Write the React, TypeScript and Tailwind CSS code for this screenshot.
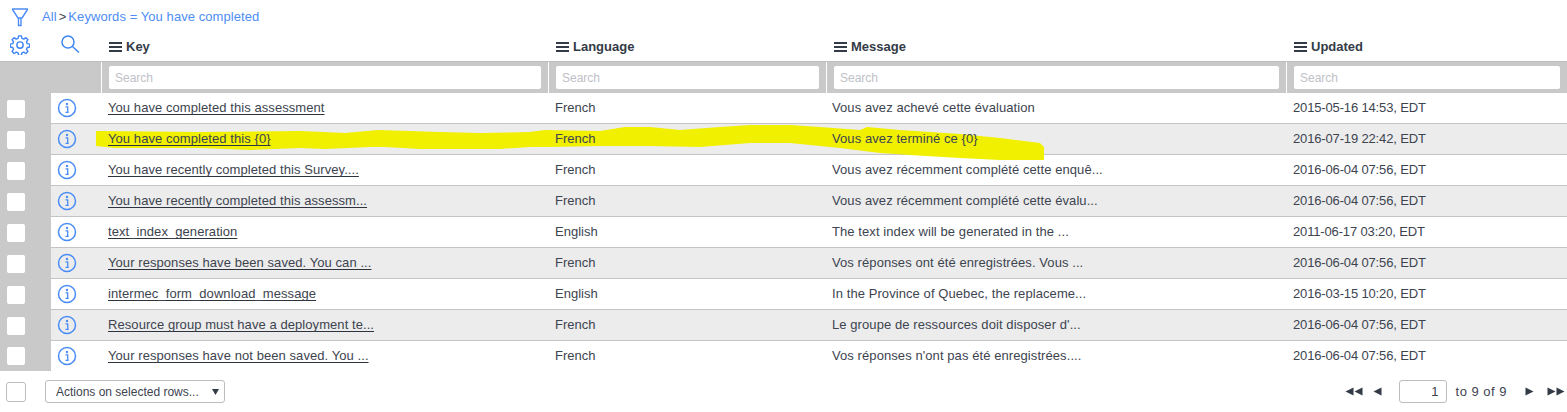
const rows = [
  ["You have completed this assessment", "French", "Vous avez achevé cette évaluation", "2015-05-16 14:53, EDT"],
  ["You have completed this {0}", "French", "Vous avez terminé ce {0}", "2016-07-19 22:42, EDT"],
  ["You have recently completed this Survey....", "French", "Vous avez récemment complété cette enquê...", "2016-06-04 07:56, EDT"],
  ["You have recently completed this assessm...", "French", "Vous avez récemment complété cette évalu...", "2016-06-04 07:56, EDT"],
  ["text_index_generation", "English", "The text index will be generated in the ...", "2011-06-17 03:20, EDT"],
  ["Your responses have been saved. You can ...", "French", "Vos réponses ont été enregistrées. Vous ...", "2016-06-04 07:56, EDT"],
  ["intermec_form_download_message", "English", "In the Province of Quebec, the replaceme...", "2016-03-15 10:20, EDT"],
  ["Resource group must have a deployment te...", "French", "Le groupe de ressources doit disposer d'...", "2016-06-04 07:56, EDT"],
  ["Your responses have not been saved. You ...", "French", "Vos réponses n'ont pas été enregistrées....", "2016-06-04 07:56, EDT"],
];

const cols = "grid grid-cols-[51px_50px_447px_278px_460px_281px]";

function Bars() {
  return (
    <svg width="13" height="10" viewBox="0 0 13 10" className="shrink-0">
      <path d="M0 0h13v2H0zM0 4h13v2H0zM0 8h13v2H0z" fill="#333b47" />
    </svg>
  );
}

function HeaderCell({ label }: { label: string }) {
  return (
    <div className="flex items-center gap-[4px] pl-[8px] text-[13px] font-bold text-[#333b47]">
      <Bars />
      {label}
    </div>
  );
}

function SearchCell() {
  return (
    <div className="flex items-center border-l border-white pl-[7px] pr-[7px]">
      <div className="flex h-[23px] w-full items-center rounded-[2px] bg-white pl-[6px] text-[12px] text-[#c0c0c8]">
        Search
      </div>
    </div>
  );
}

function InfoIcon() {
  return (
    <svg width="20" height="20" viewBox="0 0 20 20" fill="none" className="relative z-10">
      <circle cx="10" cy="10" r="8.5" stroke="#4a8cf5" strokeWidth="1.5" />
      <circle cx="10" cy="6" r="1.2" fill="#4a8cf5" />
      <path d="M8.500 8.800h2.200v5.200M8.500 14.300h3.200" stroke="#4a8cf5" strokeWidth="1.3" />
    </svg>
  );
}

function Tri({ left, n = 1 }: { left?: boolean; n?: number }) {
  return (
    <span className="flex">
      {Array.from({ length: n }).map((_, i) => (
        <svg key={i} width="9" height="9" viewBox="0 0 9 9">
          <path d={left ? "M8.500 0.500v8L0.500 4.500z" : "M0.500 0.500v8l8-4z"} fill="#333b47" />
        </svg>
      ))}
    </span>
  );
}

export default function App() {
  return (
    <div className="relative h-[412px] w-[1567px] overflow-hidden bg-white font-['Liberation_Sans',Arial,sans-serif] text-[13px] text-[#3d4450]">
      {/* Breadcrumb */}
      <div className="flex h-[33px] items-center pl-[11px] tracking-[0.07px]">
        <svg width="18" height="20" viewBox="0 0 18 20" fill="none" stroke="#4d8df5" strokeWidth="1.4">
          <path d="M1 2h16M1.500 2.500L7 11h4l5.500-8.500M7.500 11v7.500h2.500V11" />
        </svg>
        <span className="ml-[13px] text-[#4d8df5]">All</span>
        <span className="mx-[2px] text-[#3d4450]">&gt;</span>
        <span className="text-[#4d8df5]">Keywords = You have completed</span>
      </div>

      {/* Column headers */}
      <div className={`${cols} h-[28px]`}>
        <div className="pl-[10px] pt-[2px]">
          <svg width="20" height="20" viewBox="0 0 24 24" fill="none" stroke="#3f86f2" strokeWidth="1.700" strokeLinejoin="round">
            <path d="M10.300 2h3.400l.6 3 2.200.9 2.600-1.700 2.400 2.400-1.700 2.600.9 2.200 3 .6v3.400l-3 .6-.9 2.200 1.700 2.600-2.400 2.400-2.600-1.700-2.200.9-.6 3h-3.400l-.6-3-2.200-.9-2.600 1.700-2.400-2.400 1.700-2.600-.9-2.200-3-.6v-3.400l3-.6.9-2.200-1.700-2.600 2.400-2.400 2.600 1.700 2.200-.9z" transform="translate(0 -1)" />
            <circle cx="12" cy="12" r="3.800" />
          </svg>
        </div>
        <div className="pl-[10px] pt-[2px]">
          <svg width="19" height="18" viewBox="0 0 19 18" fill="none" stroke="#3f86f2" strokeWidth="1.500">
            <circle cx="7" cy="7" r="6" />
            <path d="M11.500 11.500L18 17.500" />
          </svg>
        </div>
        <HeaderCell label="Key" />
        <HeaderCell label="Language" />
        <HeaderCell label="Message" />
        <HeaderCell label="Updated" />
      </div>

      {/* Filter row */}
      <div className={`${cols} h-[32px] border-t border-[#bdbdbd] bg-[#c9c9c9]`}>
        <div />
        <div />
        <SearchCell />
        <SearchCell />
        <SearchCell />
        <SearchCell />
      </div>

      {/* Rows */}
      {rows.map((r, i) => {
        const line = i < 8 ? "border-b border-[#c4c4c4]" : "";
        return (
          <div key={i} className={`${cols} ${i < 8 ? "h-[31px]" : "h-[30px]"} ${i % 2 === 1 ? "bg-[#ececec]" : "bg-white"}`}>
            <div className="flex items-center bg-[#c9c9c9] pl-[7px]">
              <div className="h-[18px] w-[18px] rounded-[2px] bg-white" />
            </div>
            <div className={`flex items-center pl-[6px] ${line}`}>
              <InfoIcon />
            </div>
            <div className={`flex items-center pl-[7px] tracking-[0.07px] ${line}`}>
              <span className="relative z-10 underline decoration-[#2d3440] underline-offset-2 [text-decoration-skip-ink:none]">{r[0]}</span>
            </div>
            <div className={`flex items-center pl-[7px] ${line}`}>
              <span className="relative z-10">{r[1]}</span>
            </div>
            <div className={`flex items-center pl-[6px] tracking-[0.08px] ${line}`}>
              <span className="relative z-10">{r[2]}</span>
            </div>
            <div className={`flex items-center pl-[7px] tracking-[-0.15px] ${line}`}>
              <span className="relative z-10">{r[3]}</span>
            </div>
          </div>
        );
      })}

      {/* Footer */}
      <div className="flex h-[41px] items-center pl-[6px] pr-[2px]">
        <div className="h-[20px] w-[20px] rounded-[3px] border border-[#bdbdbd]" />
        <div className="ml-[19px] flex h-[23px] w-[180px] items-center justify-between rounded-[3px] border border-[#bdbdbd] pl-[10px] pr-[5px] text-[12px]">
          Actions on selected rows...
          <svg width="7" height="6" viewBox="0 0 7 6">
            <path d="M0 0h7L3.500 6z" fill="#333b47" />
          </svg>
        </div>
        <div className="ml-auto flex items-center">
          <Tri left n={2} />
          <span className="ml-[10px]"><Tri left /></span>
          <div className="ml-[17px] flex h-[23px] w-[48px] items-center justify-end rounded-[3px] border border-[#bdbdbd] pr-[7px]">1</div>
          <span className="ml-[9px] tracking-[0.5px]">to 9 of 9</span>
          <span className="ml-[18px]"><Tri /></span>
          <span className="ml-[13px]"><Tri n={2} /></span>
        </div>
      </div>

      {/* Yellow marker scribble, above the row backgrounds and under the text */}
      <svg className="absolute left-0 top-0" width="1567" height="412" viewBox="0 0 1567 412">
        <path
          d="M96 131 L200 132 L300 131 L345 133 L378 130 L440 132 L480 133 L530 132 L545 130 L600 131 L625 127 L650 127 L680 130 L720 127 L750 125 L790 125 L820 127 L860 130 L867 127 L900 130 L960 134 L1000 138 L1040 143 L1044 147 L1044 160 L1000 160 L960 158 L910 155 L880 153 L840 148 L790 143 L750 143 L700 147 L650 146 L600 146 L550 147 L530 147 L500 149 L420 149 L385 147 L370 147 L325 149 L300 148 L250 150 L200 148 L115 148 L96 146 Z"
          fill="#f0f000"
        />
      </svg>
    </div>
  );
}
